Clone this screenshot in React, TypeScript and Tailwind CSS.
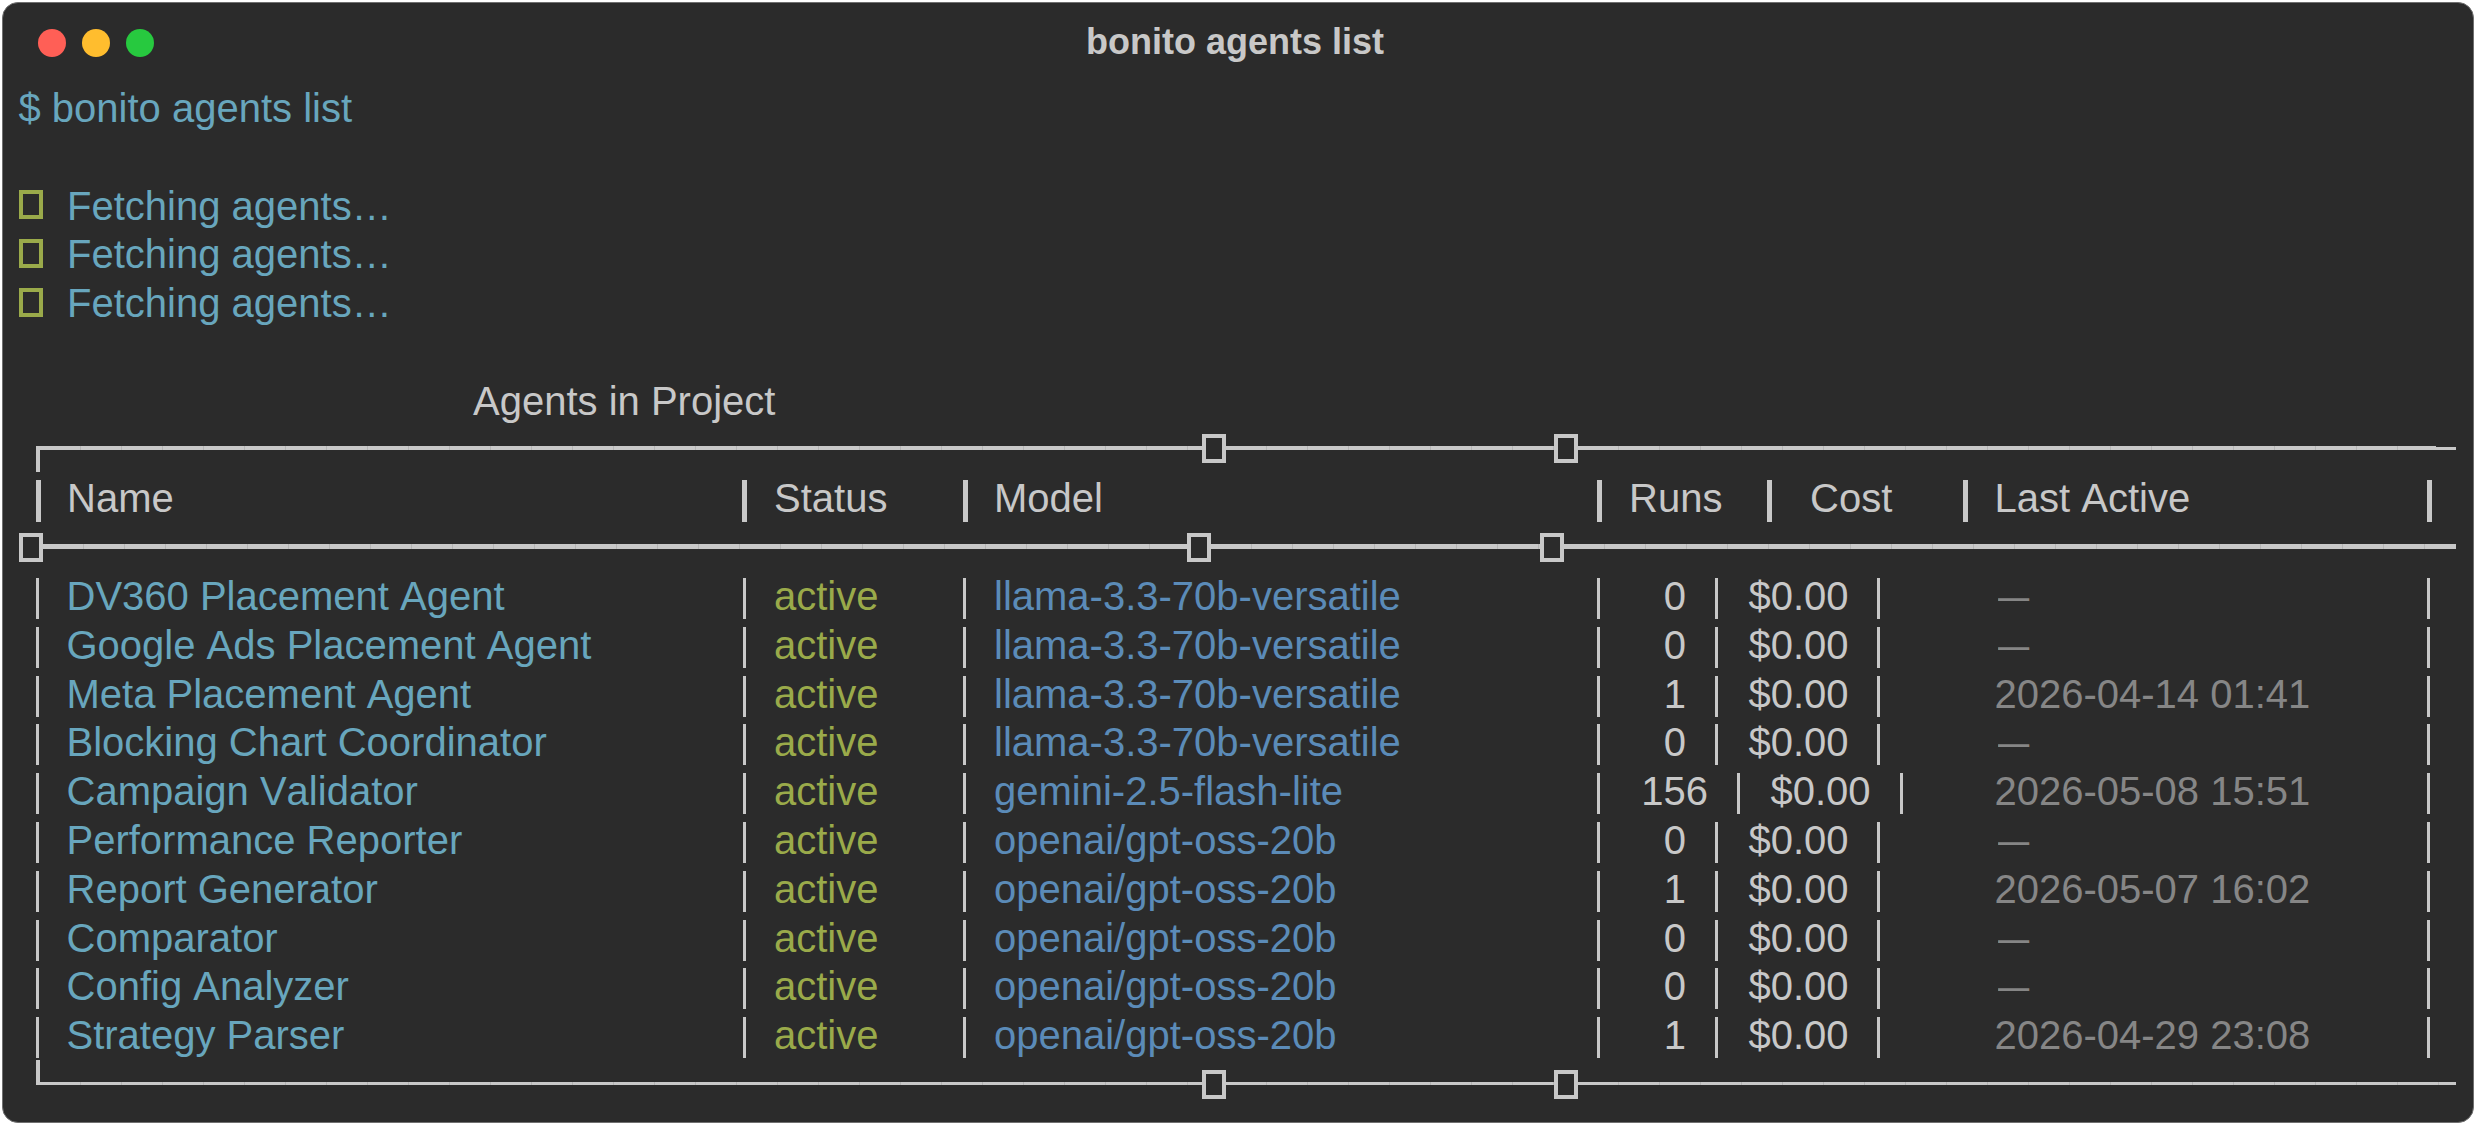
const BORDER = 'bg-[#c8c8c8]'

const agents = [
  { name: 'DV360 Placement Agent', model: 'llama-3.3-70b-versatile', runs: '0', last: '' },
  { name: 'Google Ads Placement Agent', model: 'llama-3.3-70b-versatile', runs: '0', last: '' },
  { name: 'Meta Placement Agent', model: 'llama-3.3-70b-versatile', runs: '1', last: '2026-04-14 01:41' },
  { name: 'Blocking Chart Coordinator', model: 'llama-3.3-70b-versatile', runs: '0', last: '' },
  { name: 'Campaign Validator', model: 'gemini-2.5-flash-lite', runs: '156', last: '2026-05-08 15:51' },
  { name: 'Performance Reporter', model: 'openai/gpt-oss-20b', runs: '0', last: '' },
  { name: 'Report Generator', model: 'openai/gpt-oss-20b', runs: '1', last: '2026-05-07 16:02' },
  { name: 'Comparator', model: 'openai/gpt-oss-20b', runs: '0', last: '' },
  { name: 'Config Analyzer', model: 'openai/gpt-oss-20b', runs: '0', last: '' },
  { name: 'Strategy Parser', model: 'openai/gpt-oss-20b', runs: '1', last: '2026-04-29 23:08' },
]

function Line({ className }: { className: string }) {
  return (
    <div
      className={`bg-[repeating-linear-gradient(90deg,#c8c8c8_0,#c8c8c8_40px,#b4b4b4_40px,#b4b4b4_41px)] ${className}`}
    />
  )
}

function Tofu({ className = 'border-[#c8c8c8]' }: { className?: string }) {
  return <div className={`h-[29px] w-[24px] shrink-0 border-[4px] ${className}`} />
}

function HeadBar() {
  return <div className={`mt-[6px] h-[42px] w-[5px] shrink-0 ${BORDER}`} />
}

function RowBar() {
  return <div className={`mt-[6px] h-[41px] w-[3px] shrink-0 ${BORDER}`} />
}

function Fetching() {
  return (
    <div className="flex h-[48.8px] items-start">
      <Tofu className="mt-[8.4px] border-[#9aaa4a]" />
      <span className="ml-[24px] text-[#68a6bd]">Fetching agents…</span>
    </div>
  )
}

function Header() {
  return (
    <div className="flex h-[48.8px] pl-[17px] text-[#c8c8c8]">
      <div className="flex w-[706px]">
        <HeadBar />
        <span className="ml-[26px]">Name</span>
      </div>
      <div className="flex w-[220.5px]">
        <HeadBar />
        <span className="ml-[27px]">Status</span>
      </div>
      <div className="flex w-[634.5px]">
        <HeadBar />
        <span className="ml-[26.5px]">Model</span>
      </div>
      <div className="flex w-[170px]">
        <HeadBar />
        <span className="ml-[27px]">Runs</span>
      </div>
      <div className="flex w-[196px]">
        <HeadBar />
        <span className="ml-[38px]">Cost</span>
      </div>
      <div className="flex w-[464px]">
        <HeadBar />
        <span className="ml-[26.5px]">Last Active</span>
      </div>
      <HeadBar />
    </div>
  )
}

function AgentRow({ agent }: { agent: (typeof agents)[number] }) {
  const wide = agent.runs.length > 1
  return (
    <div className="flex h-[48.8px] pl-[17px]">
      <div className="flex w-[707px]">
        <RowBar />
        <span className="ml-[27.5px] text-[#68a6bd]">{agent.name}</span>
      </div>
      <div className="flex w-[219.5px]">
        <RowBar />
        <span className="ml-[28px] text-[#9aaa4a]">active</span>
      </div>
      <div className="flex w-[634.5px]">
        <RowBar />
        <span className="ml-[28.5px] text-[#5b8bb8]">{agent.model}</span>
      </div>
      <div className={`flex justify-between text-[#c8c8c8] ${wide ? 'w-[140px]' : 'w-[118px]'}`}>
        <RowBar />
        <span className="mr-[29px]">{agent.runs}</span>
      </div>
      <div className={`flex text-[#c8c8c8] ${wide ? 'w-[163px]' : 'w-[162px]'}`}>
        <RowBar />
        <span className="ml-[30.5px]">$0.00</span>
      </div>
      <div className={`flex ${wide ? 'w-[527px]' : 'w-[550px]'}`}>
        <RowBar />
        {agent.last ? (
          <span className={`text-[#868686] ${wide ? 'ml-[91.5px]' : 'ml-[114.5px]'}`}>{agent.last}</span>
        ) : (
          <span className="ml-[117.7px] inline-block origin-left scale-x-[0.78] text-[#868686]">—</span>
        )}
      </div>
      <RowBar />
    </div>
  )
}

export default function App() {
  return (
    <div className="h-[1125px] w-[2476px] bg-white p-[2px] font-['Liberation_Sans',Arial,sans-serif] text-[40px] leading-[48.8px] [font-kerning:none]">
      <div className="h-[1121px] w-[2472px] overflow-hidden rounded-[16px] border border-[#707070] bg-[#2b2b2b]">
        <div className="relative flex h-[81px] items-center pl-[35px] pb-[2px]">
          <div className="flex gap-[16px]">
            <div className="h-[28px] w-[28px] rounded-full bg-[#ff5f56]" />
            <div className="h-[28px] w-[28px] rounded-full bg-[#ffbd2e]" />
            <div className="h-[28px] w-[28px] rounded-full bg-[#27c93f]" />
          </div>
          <div className="absolute left-0 right-[6px] text-center text-[36px] font-bold text-[#c8c8c8]">bonito agents list</div>
        </div>

        <div className="pl-[16px]">
          <div className="-ml-[0.5px] text-[#68a6bd]">$ bonito agents list</div>
          <div className="h-[48.8px]" />
          <Fetching />
          <Fetching />
          <Fetching />
          <div className="h-[48.8px]" />
          <div className="pl-[454px] text-[#c8c8c8]">Agents in Project</div>

          <div className="flex h-[48.8px] items-start pl-[17px]">
            <div className={`mt-[20.4px] h-[26px] w-[4px] shrink-0 ${BORDER}`} />
            <Line className="mt-[20.4px] h-[4.5px] w-[1162px]" />
            <Tofu className="mt-[8.4px] border-[#c8c8c8]" />
            <Line className="mt-[20.4px] h-[4.5px] w-[328px]" />
            <Tofu className="mt-[8.4px] border-[#c8c8c8]" />
            <Line className="mt-[20.4px] h-[4.5px] w-[857.5px]" />
            <div className={`mt-[21.4px] h-[3.5px] w-[20.5px] ${BORDER}`} />
          </div>

          <Header />

          <div className="flex h-[48.8px] items-start">
            <Tofu className="mt-[9.4px] border-[#c8c8c8]" />
            <Line className="mt-[21px] h-[4.5px] w-[1144px]" />
            <Tofu className="mt-[9.4px] border-[#c8c8c8]" />
            <Line className="mt-[21px] h-[4.5px] w-[329px]" />
            <Tofu className="mt-[9.4px] border-[#c8c8c8]" />
            <Line className="mt-[21px] h-[4.5px] w-[892px]" />
          </div>

          {agents.map((agent) => (
            <AgentRow key={agent.name} agent={agent} />
          ))}

          <div className="flex h-[48.8px] items-start pl-[17px]">
            <div className={`h-[25px] w-[4px] shrink-0 ${BORDER}`} />
            <Line className="mt-[21.6px] h-[3.5px] w-[1162px]" />
            <Tofu className="mt-[10.4px] border-[#c8c8c8]" />
            <Line className="mt-[21.6px] h-[3.5px] w-[328px]" />
            <Tofu className="mt-[10.4px] border-[#c8c8c8]" />
            <Line className="mt-[21.6px] h-[3.5px] w-[878px]" />
          </div>
        </div>
      </div>
    </div>
  )
}
